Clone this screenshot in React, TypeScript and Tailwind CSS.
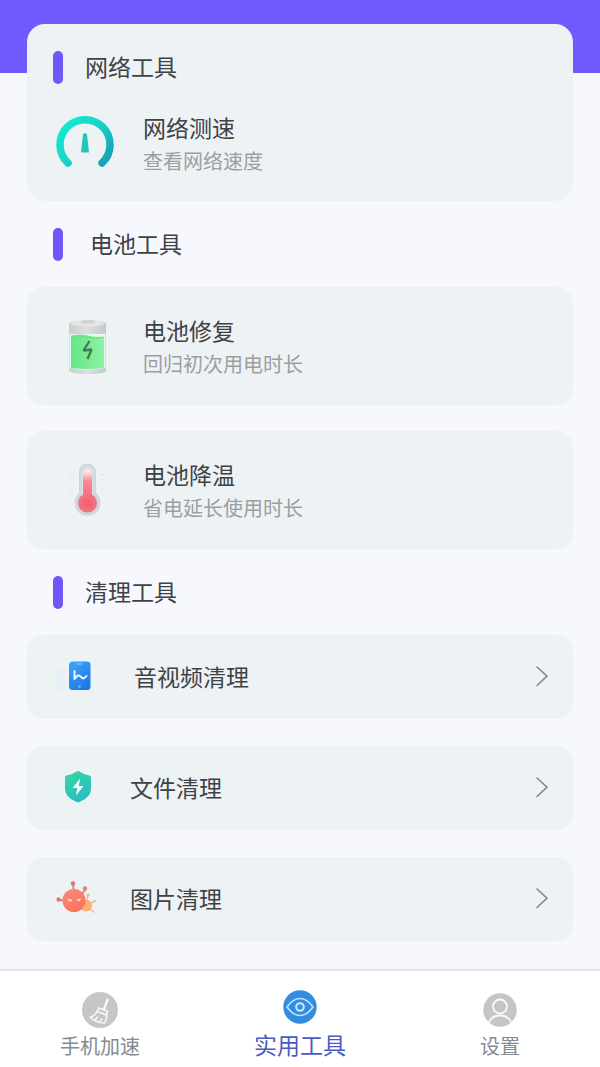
import type { ReactNode } from 'react';

function SectionHeading({ children, wide = false }: { children: ReactNode; wide?: boolean }) {
  return (
    <div className="flex h-[86px] items-center pl-[26px]">
      <span className={`h-[33px] w-[10px] rounded-full bg-[#6f57f8] ${wide ? 'mr-[27px]' : 'mr-[22px]'}`} />
      <h2 className="pb-[2px] text-[23px] leading-[34px]">{children}</h2>
    </div>
  );
}

function ToolRow({ icon, title, note }: { icon: ReactNode; title: string; note: string }) {
  return (
    <button type="button" className="flex w-full items-center text-left">
      <span className="flex w-[116px] shrink-0 justify-center">{icon}</span>
      <span className="flex flex-col">
        <span className="text-[23px] leading-[34px]">{title}</span>
        <span className="text-[20px] leading-[34px] text-[#9b9fa1]">{note}</span>
      </span>
    </button>
  );
}

function CleanRow({ icon, title, wide = false }: { icon: ReactNode; title: string; wide?: boolean }) {
  return (
    <button type="button" className="flex min-h-[84px] w-full items-center rounded-2xl bg-[#edf2f5] pr-[24px] pb-[2px] text-left">
      <span className={`shrink-0 pl-[27px] ${wide ? 'w-[107px]' : 'w-[103px]'}`}>{icon}</span>
      <span className="flex-1 text-[23px] leading-[34px]">{title}</span>
      <svg width="14" height="22" viewBox="0 0 14 22" fill="none" stroke="#858a8d" strokeWidth="1.6" aria-hidden="true">
        <path d="M2 2l10 9.200L2 20.500" strokeLinecap="round" strokeLinejoin="round" />
      </svg>
    </button>
  );
}

function GaugeIcon() {
  return (
    <svg width="60" height="60" viewBox="0 0 60 60" fill="none" aria-hidden="true">
      <defs>
        <linearGradient id="gauge" x1="8" y1="10" x2="54" y2="50" gradientUnits="userSpaceOnUse">
          <stop stopColor="#12ecd0" />
          <stop offset=".5" stopColor="#1bcfc5" />
          <stop offset="1" stopColor="#159bb6" />
        </linearGradient>
      </defs>
      <path d="M13 49A25 25 0 1 1 47 49" stroke="url(#gauge)" strokeWidth="7.500" strokeLinecap="round" />
      <path d="M28 20q2-1.500 4 0L34 38.500h-8z" fill="#25c4b9" />
    </svg>
  );
}

function BatteryIcon() {
  return (
    <svg width="64" height="64" viewBox="-2 0 64 64" aria-hidden="true">
      <defs>
        <linearGradient id="metal" x1="0" x2="1">
          <stop stopColor="#cbcdce" />
          <stop offset=".5" stopColor="#dcdedf" />
          <stop offset="1" stopColor="#c5c7c9" />
        </linearGradient>
        <linearGradient id="charge" x1="0" x2="1">
          <stop stopColor="#63e986" />
          <stop offset=".5" stopColor="#7bea95" />
          <stop offset="1" stopColor="#8df3a5" />
        </linearGradient>
      </defs>
      <path d="M14 9q0-3 19-4 18 1 18 4v46q0 4-18 4t-19-4z" fill="url(#metal)" />
      <ellipse cx="32.500" cy="8.500" rx="16.500" ry="3.200" fill="#e2e5e5" />
      <ellipse cx="33" cy="6.800" rx="7" ry="1.800" fill="#d0d3d3" />
      <path d="M14.500 19h36v34q-17 3-36 0z" fill="#e9fbf0" />
      <path d="M16 20.500q10-2 17 0t16 1V53q-16 2-33 0z" fill="url(#charge)" />
      <path d="M17 23q11-2 17-.5t14 0" fill="none" stroke="#61dd80" />
      <path d="M34.500 26 28.500 35.500l8-1-4 9.500" fill="none" stroke="#3f7956" strokeWidth="2.300" strokeLinejoin="bevel" />
    </svg>
  );
}

function ThermometerIcon() {
  return (
    <svg width="64" height="64" viewBox="-2 2 64 64" aria-hidden="true">
      <defs>
        <radialGradient id="bulb">
          <stop stopColor="#f96374" />
          <stop offset="1" stopColor="#eb7582" />
        </radialGradient>
        <linearGradient id="mercury" x1="0" y1="0" x2="0" y2="1">
          <stop stopColor="#fff1ed" />
          <stop offset=".2" stopColor="#fbc0c0" />
          <stop offset=".35" stopColor="#f98897" />
          <stop offset="1" stopColor="#f86878" />
        </linearGradient>
      </defs>
      <path d="M17 17v24M48 17v24" stroke="#e2e8e9" strokeWidth="4" strokeDasharray="1 4" />
      <path d="M24 15a8.500 8.500 0 0 1 17 0v21a13 13 0 1 1-17 0z" fill="#cfd7d9" />
      <path d="M26.500 15a6 6 0 0 1 12 0v23h-12z" fill="#dbe1e2" />
      <circle cx="32.500" cy="46" r="9.500" fill="url(#bulb)" />
      <path d="M28 17a4.500 4.500 0 0 1 9 0v27h-9z" fill="url(#mercury)" />
      <circle cx="33" cy="46.500" r="4.500" fill="#f85f70" />
    </svg>
  );
}

function PhoneIcon() {
  return (
    <svg width="46" height="40" viewBox="0 0 46 40" aria-hidden="true">
      <defs>
        <linearGradient id="phone" x1="0" y1="0" x2=".7" y2="1">
          <stop stopColor="#43a5fb" />
          <stop offset="1" stopColor="#1b77e9" />
        </linearGradient>
      </defs>
      <path d="M1 13h10v21H1z" fill="#e7f0f6" />
      <rect x="15" y="5.500" width="21.500" height="28.500" rx="3.500" fill="url(#phone)" />
      <path d="M23 8h5" stroke="#94cdff" strokeLinecap="round" />
      <circle cx="25.500" cy="30.500" r="1.300" fill="#7bbdff" />
      <path d="M20.500 15v8q3.500-5 5.500-3t3 2.500q1.500 0 3.500-2.500" fill="none" stroke="#eaf7ff" strokeWidth="2" strokeLinecap="round" strokeLinejoin="round" />
    </svg>
  );
}

function ShieldIcon() {
  return (
    <svg width="46" height="40" viewBox="0 0 46 40" aria-hidden="true">
      <defs>
        <linearGradient id="shield" x1=".3" y1="0" x2=".7" y2="1">
          <stop stopColor="#32d79f" />
          <stop offset="1" stopColor="#2bb9cb" />
        </linearGradient>
      </defs>
      <path d="M1 14h8v20H1z" fill="#e8f2f3" />
      <path d="M22.500 4.500q1.500-.8 3 0 4 3.200 10 4 1.500.3 1.500 2v11q0 9-11.500 13.500-1.500.6-3 0Q11 30.500 11 21.500v-11q0-1.700 1.500-2 6-.8 10-4z" fill="url(#shield)" />
      <path d="M26 11.500 18.500 21h4.700L22 28.500l7.500-9.500h-4.700z" fill="#effffd" />
    </svg>
  );
}

function GermIcon() {
  return (
    <svg width="46" height="40" viewBox="-2 -1 46 40" aria-hidden="true">
      <defs>
        <linearGradient id="germ" x1="0" y1="0" x2=".5" y2="1">
          <stop stopColor="#f58b77" />
          <stop offset="1" stopColor="#fb7461" />
        </linearGradient>
      </defs>
      <g fill="#fbb271" stroke="#f6b47f" strokeLinecap="round">
        <path d="m31 20 1-4m3 8 4-2m-5 8 4 3" strokeWidth="1.500" />
        <circle cx="30" cy="26.500" r="6" stroke="none" />
        <circle cx="32" cy="16" r="1" />
        <circle cx="39" cy="22" r=".6" />
      </g>
      <path d="m18 14-1-9m8 11 4-5M11 22l-7-1" stroke="#e4837b" strokeWidth="2" strokeLinecap="round" />
      <circle cx="17" cy="4.500" r="2.200" fill="#d9797a" />
      <circle cx="29" cy="9.500" r="2.200" fill="#e9837a" />
      <ellipse cx="2.500" cy="20.500" rx="2" ry="2.300" fill="#d9797a" />
      <circle cx="18" cy="21.500" r="11.500" fill="url(#germ)" />
      <path d="m11.500 19.500 5 1.200q-.5 2-2.500 1.800t-2.500-3zM25 19l-4.500 1.700q.5 1.800 2.300 1.600T25 19z" fill="#ffd7be" />
    </svg>
  );
}

function BroomIcon() {
  return (
    <svg width="36" height="36" viewBox="0 0 36 36" fill="none" stroke="#f8f8f8" strokeWidth="1.600" strokeLinejoin="round" strokeLinecap="round" aria-hidden="true">
      <circle cx="18" cy="18" r="18" fill="#c6c6c6" stroke="none" />
      <path d="m25.500 7.500-3.500 10" strokeWidth="2.400" />
      <path d="m17 16 8.500 3-1 4-9.500-3.500z" />
      <path d="M15 19.500q-2.500 5-7 5.500 5 5.500 14.500 6 2.500-3.500 2-8" />
      <path d="m13 28 2.500-3m2 5 2.500-3" />
    </svg>
  );
}

function EyeIcon() {
  return (
    <svg width="34" height="34" viewBox="0 0 34 34" fill="none" aria-hidden="true">
      <circle cx="17" cy="17" r="16.700" fill="#328de0" />
      <path d="M4 17q6-8.500 13-8.500T30 17q-6 8.500-13 8.500T4 17z" stroke="#b9e3ff" strokeWidth="1.700" strokeLinejoin="round" />
      <circle cx="17" cy="17" r="3.800" stroke="#c8eaff" strokeWidth="2" />
    </svg>
  );
}

function PersonIcon() {
  return (
    <svg width="34" height="34" viewBox="0 0 34 34" fill="none" aria-hidden="true">
      <defs>
        <clipPath id="avatar">
          <circle cx="17" cy="17" r="16.700" />
        </clipPath>
      </defs>
      <g clipPath="url(#avatar)">
        <path d="M0 0h34v34H0z" fill="#c5c5c6" />
        <circle cx="17" cy="13.500" r="7" stroke="#fafafa" strokeWidth="1.800" />
        <path d="M5.500 30q3-7.500 11.500-7.500T28.500 30" stroke="#fafafa" strokeWidth="1.800" />
      </g>
    </svg>
  );
}

function NavItem({ icon, label, active = false }: { icon: ReactNode; label: string; active?: boolean }) {
  return (
    <a
      href="#"
      aria-current={active ? 'page' : undefined}
      className={`flex flex-1 flex-col items-center ${active ? 'gap-[2px] pt-[18px] text-[23px] text-[#4a5bc4]' : 'gap-[1px] pt-[21px] text-[20px] text-[#858991]'}`}
    >
      <span className="flex h-[36px] items-center">{icon}</span>
      <span className="leading-[34px]">{label}</span>
    </a>
  );
}

export default function App() {
  return (
    <div className="flex min-h-screen flex-col bg-[#f6f8fd] font-['Noto_Sans_CJK_SC',sans-serif] text-[#3f4244]">
      <header className="h-[73px] bg-[#705aff]" />
      <main className="relative -mt-[49px] flex-1 px-[27px] pb-[28px]">
        <section className="rounded-[18px] bg-[#edf2f5] pb-[23px]">
          <SectionHeading>网络工具</SectionHeading>
          <ToolRow icon={<GaugeIcon />} title="网络测速" note="查看网络速度" />
        </section>

        <section>
          <SectionHeading wide>电池工具</SectionHeading>
          <div className="flex flex-col gap-[26px]">
            <div className="rounded-2xl bg-[#edf2f5] pt-[26px] pb-[24px]">
              <ToolRow icon={<BatteryIcon />} title="电池修复" note="回归初次用电时长" />
            </div>
            <div className="rounded-2xl bg-[#edf2f5] pt-[26px] pb-[24px]">
              <ToolRow icon={<ThermometerIcon />} title="电池降温" note="省电延长使用时长" />
            </div>
          </div>
        </section>

        <section>
          <SectionHeading>清理工具</SectionHeading>
          <div className="flex flex-col gap-[27px]">
            <CleanRow icon={<PhoneIcon />} title="音视频清理" wide />
            <CleanRow icon={<ShieldIcon />} title="文件清理" />
            <CleanRow icon={<GermIcon />} title="图片清理" />
          </div>
        </section>
      </main>
      <nav className="flex border-t-2 border-[#e1e4e8] bg-white pb-[5px]">
        <NavItem icon={<BroomIcon />} label="手机加速" />
        <NavItem icon={<EyeIcon />} label="实用工具" active />
        <NavItem icon={<PersonIcon />} label="设置" />
      </nav>
    </div>
  );
}
